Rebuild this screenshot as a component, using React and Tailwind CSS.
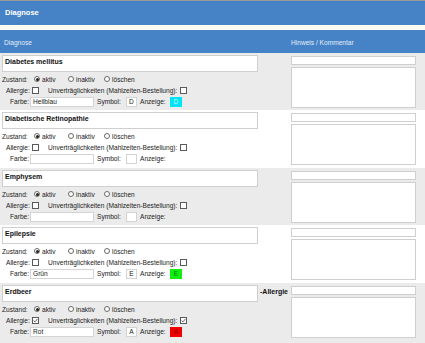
import React from "react";

const rows = [
  { name: "Diabetes mellitus", farbe: "Hellblau", symbol: "D", color: "bg-[#00e4f7]", text: "text-[#c8f8ff]", gray: true, h: "h-[57px]" },
  { name: "Diabetische Retinopathie", farbe: "", symbol: "", color: "", text: "", gray: false, h: "h-[58px]" },
  { name: "Emphysem", farbe: "", symbol: "", color: "", text: "", gray: true, h: "h-[57px]" },
  { name: "Epilepsie", farbe: "Grün", symbol: "E", color: "bg-[#10f010]", text: "text-[#0a7a0a]", gray: false, h: "h-[58px]" },
  { name: "Erdbeer", farbe: "Rot", symbol: "A", color: "bg-[#f00000]", text: "text-[#8a0000]", gray: true, h: "h-[60px]", allergy: true },
];

const Radio = ({ checked }) => (
  <span className="inline-flex items-center justify-center w-[6px] h-[6px] rounded-full border border-[#6a6a6a] bg-white mr-[2px]">
    {checked && <span className="w-[3px] h-[3px] rounded-full bg-[#222]" />}
  </span>
);

const Check = ({ checked }) => (
  <span className="inline-flex items-center justify-center w-[7px] h-[7px] border border-[#5a5a5a] bg-white">
    {checked && (
      <svg width="5" height="5" viewBox="0 0 5 5">
        <path d="M0.6 2.6 L2 3.9 L4.4 1" fill="none" stroke="#444" strokeWidth="0.8" />
      </svg>
    )}
  </span>
);

const Row = ({ r }) => (
  <div className={`flex ${r.h} ${r.gray ? "bg-[#ebebeb]" : "bg-white"}`}>
    <div className="w-[258px] pl-[2px] pt-[2px]">
      <div className="h-[17px] border border-[#cfcfcf] bg-white px-[2px] pt-[1px] font-bold text-[7px] leading-[9px] text-[#111]">
        {r.name}
      </div>
      <div className="mt-[2px] flex items-center h-[11px]">
        <span className="w-[32px]">Zustand:</span>
        <span className="w-[34px] flex items-center"><Radio checked />aktiv</span>
        <span className="w-[36px] flex items-center"><Radio />inaktiv</span>
        <span className="flex items-center"><Radio />löschen</span>
      </div>
      <div className="flex items-center h-[11px]">
        <span className="w-[30px] pl-[4px]">Allergie:</span>
        <Check checked={r.allergy} />
        <span className="ml-[9px] mr-[3px]">Unverträglichkeiten (Mahlzeiten-Bestellung):</span>
        <Check checked={r.allergy} />
      </div>
      <div className="flex items-center h-[11px]">
        <span className="w-[28px] pl-[8px]">Farbe:</span>
        <span className="w-[64px] h-[10px] border border-[#d4d4d4] bg-white pl-[2px] leading-[8px]">{r.farbe}</span>
        <span className="w-[29px] ml-[3px]">Symbol:</span>
        <span className="w-[11px] h-[10px] border border-[#d4d4d4] bg-white text-center leading-[8px]">{r.symbol}</span>
        <span className="w-[30px] ml-[3px]">Anzeige:</span>
        {r.color && (
          <span className={`w-[12px] h-[10px] ${r.color} ${r.text} text-center leading-[10px]`}>{r.symbol}</span>
        )}
      </div>
    </div>
    <div className="w-[33px] pt-[4px] pl-[2px] font-bold text-[7px] text-[#111] leading-[9px]">
      {r.allergy ? "-Allergie" : ""}
    </div>
    <div className="w-[125px] pt-[3px]">
      <div className="h-[9px] border border-[#cfcfcf] bg-white" />
      <div className="mt-[2px] h-[41px] border border-[#cfcfcf] bg-white" />
    </div>
  </div>
);

export default function App() {
  return (
    <div className="w-[425px] h-[343px] overflow-hidden bg-white font-['Liberation_Sans',Arial,sans-serif] text-[6.6px] text-[#222]">
      <div className="h-[25px] border-t border-[#9a9a9a] bg-[#4683c6] pl-[5px] flex items-center font-bold text-[7.5px] text-white">
        Diagnose
      </div>
      <div className="h-[5px] bg-[#fdfaf1]" />
      <div className="h-[23px] bg-[#4683c6] flex items-center pt-[3px] text-[#e2ecf8]">
        <span className="w-[291px] pl-[4px]">Diagnose</span>
        <span>Hinweis / Kommentar</span>
      </div>
      {rows.map((r) => (
        <Row key={r.name} r={r} />
      ))}
    </div>
  );
}
